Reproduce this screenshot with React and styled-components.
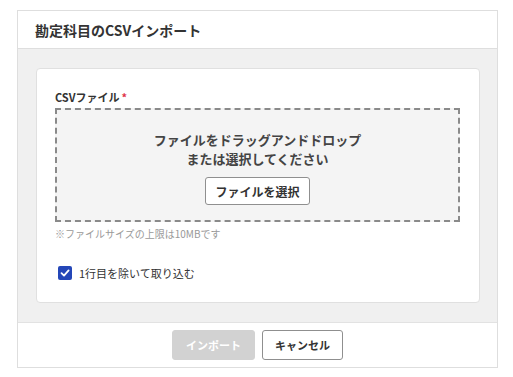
import React from "react";
import styled, { createGlobalStyle } from "styled-components";

const GlobalStyle = createGlobalStyle`
  body {
    margin: 0;
    background: #fff;
    font-family: "Noto Sans CJK JP", "Noto Sans", sans-serif;
    color: #333;
  }
`;

function App() {
  return (
    <>
      <GlobalStyle />
      <Page>
        <Modal>
          <Header>勘定科目のCSVインポート</Header>
          <Body>
            <Card>
              <Label>
                CSVファイル<Required>*</Required>
              </Label>
              <DropZone>
                <DropText>
                  ファイルをドラッグアンドドロップ
                  <br />
                  または選択してください
                </DropText>
                <SelectButton>ファイルを選択</SelectButton>
              </DropZone>
              <Hint>※ファイルサイズの上限は10MBです</Hint>
              <CheckRow>
                <CheckBox>
                  <svg width="10" height="10" viewBox="0 0 10 10">
                    <path d="M1.5 5.2 L4 7.6 L8.6 2.4" fill="none" stroke="#fff" strokeWidth="1.8" strokeLinecap="round" strokeLinejoin="round" />
                  </svg>
                </CheckBox>
                1行目を除いて取り込む
              </CheckRow>
            </Card>
          </Body>
          <Footer>
            <Button disabled $primary>インポート</Button>
            <Button>キャンセル</Button>
          </Footer>
        </Modal>
      </Page>
    </>
  );
}

export default App;

const Page = styled.div`
  padding: 10px 15px 0 17px;
`;

const Modal = styled.div`
  width: 481px;
  box-sizing: border-box;
  border: 1px solid #dedede;
  background: #fff;
`;

const Header = styled.div`
  height: 37px;
  display: flex;
  align-items: center;
  padding-left: 17px;
  font-size: 14px;
  font-weight: 700;
  color: #333;
  border-bottom: 1px solid #dedede;
`;

const Body = styled.div`
  background: #f0f0f0;
  padding: 19px 17px 19px 18px;
  border-bottom: 1px solid #e2e2e2;
`;

const Card = styled.div`
  background: #fff;
  border: 1px solid #e0e0e0;
  border-radius: 4px;
  padding: 20px 19px 21px 18px;
`;

const Label = styled.div`
  font-size: 11px;
  font-weight: 700;
  line-height: 16px;
  color: #333;
  margin-bottom: 3px;
`;

const Required = styled.span`
  color: #e0344a;
  margin-left: 2px;
`;

const DropZone = styled.div`
  height: 114px;
  box-sizing: border-box;
  border: 2px dashed #8a8a8a;
  background: #f4f4f4;
  display: flex;
  flex-direction: column;
  align-items: center;
  padding-top: 20px;
`;

const DropText = styled.div`
  font-size: 13px;
  font-weight: 700;
  line-height: 19px;
  color: #444;
  text-align: center;
`;

const SelectButton = styled.button`
  margin-top: 9px;
  height: 28px;
  width: 105px;
  background: #fff;
  border: 1px solid #8f8f8f;
  border-radius: 3px;
  font-family: inherit;
  font-size: 12px;
  font-weight: 700;
  color: #333;
`;

const Hint = styled.div`
  margin-top: 5px;
  font-size: 10px;
  line-height: 14px;
  color: #999;
`;

const CheckRow = styled.div`
  margin-top: 24px;
  display: flex;
  align-items: center;
  gap: 7px;
  font-size: 11px;
  color: #333;
  padding-left: 3px;
`;

const CheckBox = styled.span`
  width: 14px;
  height: 14px;
  border-radius: 2px;
  background: #2447b8;
  display: flex;
  align-items: center;
  justify-content: center;
`;

const Footer = styled.div`
  height: 44px;
  display: flex;
  align-items: center;
  justify-content: center;
  gap: 7px;
`;

const Button = styled.button`
  height: 30px;
  padding: 0;
  width: ${(p) => (p.$primary ? "83px" : "81px")};
  border-radius: 3px;
  font-family: inherit;
  font-size: 11px;
  font-weight: 700;
  background: ${(p) => (p.$primary ? "#d2d2d2" : "#fff")};
  color: ${(p) => (p.$primary ? "#fff" : "#333")};
  border: 1px solid ${(p) => (p.$primary ? "#d2d2d2" : "#8f8f8f")};
`;
